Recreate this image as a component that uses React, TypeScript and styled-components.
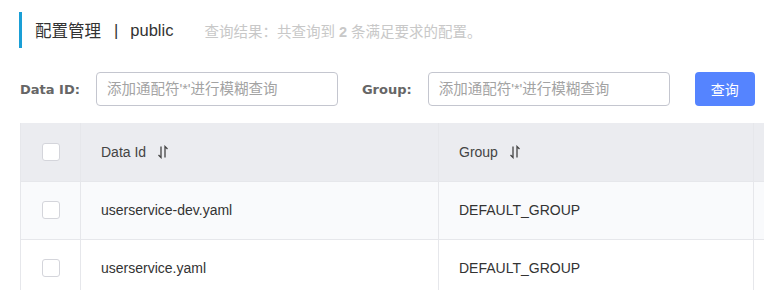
import React from "react";
import styled, { createGlobalStyle } from "styled-components";

const colors = {
  accent: "#1a9fd6",
  title: "#333333",
  muted: "#c8c8c8",
  label: "#666666",
  border: "#e6e7eb",
  inputBorder: "#c4c6cf",
  placeholder: "#a3a3a3",
  primary: "#5584ff",
  headBg: "#ebecf0",
  stripeBg: "#f9fafc",
  text: "#333333",
};

const GlobalStyle = createGlobalStyle`
  html, body {
    margin: 0;
    padding: 0;
    background: #ffffff;
    font-family: "Liberation Sans", "Noto Sans CJK SC", sans-serif;
  }
`;

type Row = { dataId: string; group: string };

const rows: Row[] = [
  { dataId: "userservice-dev.yaml", group: "DEFAULT_GROUP" },
  { dataId: "userservice.yaml", group: "DEFAULT_GROUP" },
];

const SortIcon: React.FC = () => (
  <svg width="12" height="14" viewBox="0 0 12 14" fill="none">
    <path d="M4 1.5V12.5L1.5 10" stroke="#444" strokeWidth="1.3" />
    <path d="M8 12.5V1.5L10.5 4" stroke="#444" strokeWidth="1.3" />
  </svg>
);

const App: React.FC = () => {
  return (
    <Page>
      <GlobalStyle />
      <TitleBar>
        <Title>
          配置管理<Divider>|</Divider>public
        </Title>
        <Summary>
          查询结果：共查询到 <b>2</b> 条满足要求的配置。
        </Summary>
      </TitleBar>

      <Toolbar>
        <Field>
          <Label>Data ID:</Label>
          <Input placeholder="添加通配符'*'进行模糊查询" />
        </Field>
        <Field>
          <Label>Group:</Label>
          <Input placeholder="添加通配符'*'进行模糊查询" />
        </Field>
        <SearchButton>查询</SearchButton>
      </Toolbar>

      <TableWrap>
        <Table>
          <colgroup>
            <col style={{ width: 60 }} />
            <col style={{ width: 358 }} />
            <col style={{ width: 315 }} />
            <col style={{ width: 120 }} />
          </colgroup>
          <thead>
            <tr>
              <HeadCell $center>
                <Checkbox />
              </HeadCell>
              <HeadCell>
                <HeadInner>
                  Data Id <SortIcon />
                </HeadInner>
              </HeadCell>
              <HeadCell>
                <HeadInner>
                  Group <SortIcon />
                </HeadInner>
              </HeadCell>
              <HeadCell />
            </tr>
          </thead>
          <tbody>
            {rows.map((row, i) => (
              <BodyRow key={row.dataId} $striped={i === 0}>
                <Cell $center>
                  <Checkbox />
                </Cell>
                <Cell>{row.dataId}</Cell>
                <Cell>{row.group}</Cell>
                <Cell />
              </BodyRow>
            ))}
          </tbody>
        </Table>
      </TableWrap>
    </Page>
  );
};

const Page = styled.div`
  width: 774px;
  height: 308px;
  overflow: hidden;
  padding-left: 20px;
  box-sizing: border-box;
  background: #ffffff;
`;

const TitleBar = styled.div`
  display: flex;
  align-items: center;
  margin-top: 12px;
  height: 36px;
  border-left: 3px solid ${colors.accent};
  padding-left: 13px;
  margin-left: -1px;
`;

const Title = styled.div`
  display: flex;
  align-items: center;
  font-size: 16.5px;
  color: ${colors.title};
  white-space: nowrap;
`;

const Divider = styled.span`
  margin: 0 12px 0 13px;
`;

const Summary = styled.div`
  margin-left: 31px;
  font-size: 14.5px;
  color: ${colors.muted};
  white-space: nowrap;

  b {
    font-weight: bold;
  }
`;

const Toolbar = styled.div`
  display: flex;
  align-items: center;
  margin-top: 24px;
  height: 34px;
`;

const Field = styled.div`
  display: flex;
  align-items: center;
  margin-right: 24px;
`;

const Label = styled.label`
  font-family: "DejaVu Sans", "Noto Sans CJK SC", sans-serif;
  font-weight: bold;
  font-size: 13px;
  color: ${colors.label};
  margin-right: 16px;
  white-space: nowrap;
`;

const Input = styled.input`
  width: 242px;
  height: 34px;
  box-sizing: border-box;
  border: 1px solid ${colors.inputBorder};
  border-radius: 4px;
  padding: 0 10px;
  font-size: 14.5px;
  font-family: "Liberation Sans", "Noto Sans CJK SC", sans-serif;
  color: ${colors.text};
  outline: none;

  &::placeholder {
    color: ${colors.placeholder};
  }
`;

const SearchButton = styled.button`
  width: 60px;
  height: 34px;
  border: none;
  border-radius: 4px;
  background: ${colors.primary};
  color: #ffffff;
  font-size: 14px;
  font-family: "Noto Sans CJK SC", sans-serif;
  margin-left: 1px;
  cursor: pointer;
`;

const TableWrap = styled.div`
  margin-top: 17px;
  width: 744px;
  height: 167px;
  overflow: hidden;
`;

const Table = styled.table`
  width: 853px;
  border-collapse: collapse;
  table-layout: fixed;
  color: ${colors.text};
`;

const HeadCell = styled.th<{ $center?: boolean }>`
  height: 58px;
  box-sizing: border-box;
  background: ${colors.headBg};
  border: 1px solid ${colors.border};
  border-top: none;
  font-weight: normal;
  text-align: ${(p) => (p.$center ? "center" : "left")};
  padding: ${(p) => (p.$center ? "0" : "0 0 0 20px")};
  font-size: 14px;
  color: #444;
`;

const HeadInner = styled.span`
  display: inline-flex;
  align-items: center;
  gap: 11px;
`;

const BodyRow = styled.tr<{ $striped?: boolean }>`
  background: ${(p) => (p.$striped ? colors.stripeBg : "#ffffff")};
`;

const Cell = styled.td<{ $center?: boolean }>`
  height: 58px;
  box-sizing: border-box;
  border: 1px solid ${colors.border};
  text-align: ${(p) => (p.$center ? "center" : "left")};
  padding: ${(p) => (p.$center ? "0" : "0 0 0 20px")};
  font-size: 14px;
  color: #333;
`;

const Checkbox = styled.span`
  display: inline-block;
  vertical-align: middle;
  width: 18px;
  height: 18px;
  box-sizing: border-box;
  border: 1px solid #d4d5db;
  border-radius: 3px;
  background: #ffffff;
`;

export default App;
